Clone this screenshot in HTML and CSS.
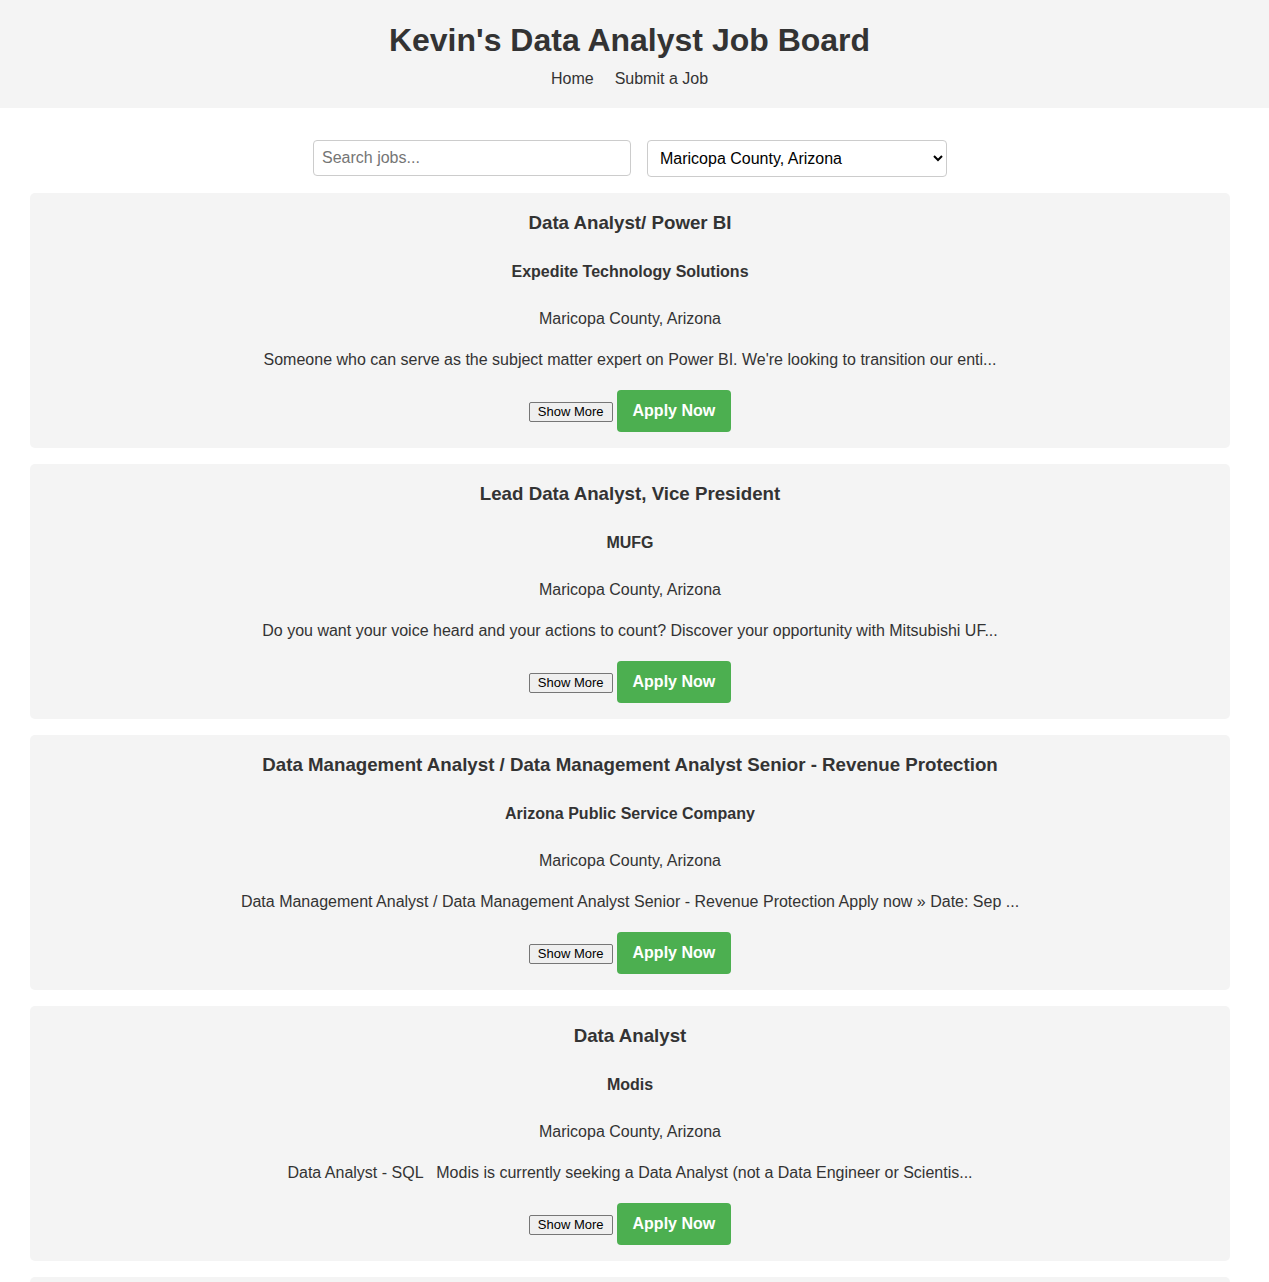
FILE: index.html
```html
<!DOCTYPE html>
<html lang="en">
<head>
<meta charset="utf-8">
<title>Kevin's Data Analyst Job Board</title>
<link rel="stylesheet" href="styles.css">
</head>
<body>
<header class="site-header">
  <h1 class="site-title">Kevin's Data Analyst Job Board</h1>
  <nav class="site-nav">
    <a href="#" class="nav-link">Home</a>
    <a href="#" class="nav-link">Submit a Job</a>
  </nav>
</header>
<main class="container">
  <div class="filters">
    <input class="search-input" type="text" placeholder="Search jobs...">
    <select class="location-select">
      <option>Maricopa County, Arizona</option>
    </select>
  </div>
  <div class="job-list">
    <article class="job-card">
      <h2 class="job-title">Data Analyst/ Power BI</h2>
      <h3 class="job-company">Expedite Technology Solutions</h3>
      <p class="job-location">Maricopa County, Arizona</p>
      <p class="job-desc">Someone who can serve as the subject matter expert on Power BI. We're looking to transition our enti...</p>
      <div class="job-actions">
        <button class="show-more">Show More</button>
        <a href="#" class="apply-btn">Apply Now</a>
      </div>
    </article>
    <article class="job-card">
      <h2 class="job-title">Lead Data Analyst, Vice President</h2>
      <h3 class="job-company">MUFG</h3>
      <p class="job-location">Maricopa County, Arizona</p>
      <p class="job-desc">Do you want your voice heard and your actions to count? Discover your opportunity with Mitsubishi UF...</p>
      <div class="job-actions">
        <button class="show-more">Show More</button>
        <a href="#" class="apply-btn">Apply Now</a>
      </div>
    </article>
    <article class="job-card">
      <h2 class="job-title">Data Management Analyst / Data Management Analyst Senior - Revenue Protection</h2>
      <h3 class="job-company">Arizona Public Service Company</h3>
      <p class="job-location">Maricopa County, Arizona</p>
      <p class="job-desc">Data Management Analyst / Data Management Analyst Senior - Revenue Protection Apply now » Date: Sep ...</p>
      <div class="job-actions">
        <button class="show-more">Show More</button>
        <a href="#" class="apply-btn">Apply Now</a>
      </div>
    </article>
    <article class="job-card">
      <h2 class="job-title">Data Analyst</h2>
      <h3 class="job-company">Modis</h3>
      <p class="job-location">Maricopa County, Arizona</p>
      <p class="job-desc">Data Analyst - SQL &nbsp; Modis is currently seeking a Data Analyst (not a Data Engineer or Scientis...</p>
      <div class="job-actions">
        <button class="show-more">Show More</button>
        <a href="#" class="apply-btn">Apply Now</a>
      </div>
    </article>
    <article class="job-card">
      <h2 class="job-title">Business Data Analyst</h2>
      <h3 class="job-company">Banner Health</h3>
      <p class="job-location">Maricopa County, Arizona</p>
      <p class="job-desc">Banner Health is looking for a Business Data Analyst to join our growing analytics team in Phoe...</p>
      <div class="job-actions">
        <button class="show-more">Show More</button>
        <a href="#" class="apply-btn">Apply Now</a>
      </div>
    </article>
  </div>
</main>
</body>
</html>
```
FILE: styles.css
```css
* {
  box-sizing: border-box;
}
html, body {
  margin: 0;
  padding: 0;
  background: #ffffff;
}
body {
  font-family: "Liberation Sans", Arial, sans-serif;
  color: #333333;
  font-size: 16px;
}
.site-header {
  background: #f4f4f4;
  padding: 22px 10px 20px 0;
  text-align: center;
}
.site-title {
  margin: 0 0 11px;
  font-size: 32px;
  line-height: 37px;
  font-weight: bold;
  color: #333333;
}
.site-nav {
  display: flex;
  justify-content: center;
  gap: 21px;
  line-height: 18px;
}
.nav-link {
  color: #333333;
  text-decoration: none;
  font-size: 16px;
}
.container {
  width: 1200px;
  margin: 0 0 0 30px;
  padding-top: 32px;
}
.filters {
  display: flex;
  justify-content: center;
  gap: 16px;
  margin-bottom: 16px;
}
.search-input {
  width: 318px;
  height: 36px;
  padding: 8px;
  border: 1px solid #cccccc;
  border-radius: 4px;
  font-family: "Liberation Sans", Arial, sans-serif;
  font-size: 16px;
  color: #333333;
  background: #ffffff;
}
.search-input::placeholder {
  color: #757575;
}
.location-select {
  width: 300px;
  height: 37px;
  padding: 0 8px;
  border: 1px solid #cccccc;
  border-radius: 4px;
  font-family: "Liberation Sans", Arial, sans-serif;
  font-size: 16px;
  color: #000000;
  background: #ffffff;
}
.job-list {
  display: flex;
  flex-direction: column;
  gap: 16px;
}
.job-card {
  background: #f4f4f4;
  border-radius: 5px;
  padding: 18px 20px 16px;
  text-align: center;
}
.job-title {
  margin: 0;
  font-size: 18.72px;
  line-height: 24px;
  font-weight: bold;
}
.job-company {
  margin: 28px 0 0;
  font-size: 16px;
  line-height: 18px;
  font-weight: bold;
}
.job-location {
  margin: 29px 0 0;
  font-size: 16px;
  line-height: 18px;
}
.job-desc {
  margin: 23px 0 0;
  font-size: 16px;
  line-height: 18px;
}
.job-actions {
  margin-top: 21px;
  display: flex;
  justify-content: center;
  align-items: center;
  gap: 4px;
}
.show-more {
  font-family: "Liberation Sans", Arial, sans-serif;
  font-size: 13px;
  line-height: 15px;
  height: 20px;
  padding: 1px 8px;
  border: 1px solid #767676;
  border-radius: 2px;
  background: #efefef;
  color: #000000;
  margin-top: 1px;
}
.apply-btn {
  display: inline-block;
  background: #4caf50;
  color: #ffffff;
  font-weight: bold;
  font-size: 16px;
  line-height: 18px;
  padding: 12px 16px;
  border-radius: 4px;
  text-decoration: none;
}
```
